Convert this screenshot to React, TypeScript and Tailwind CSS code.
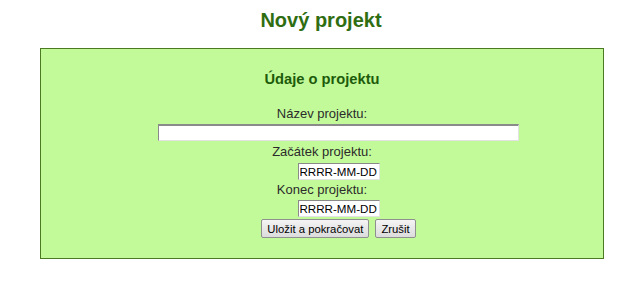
export default function App() {
  const field =
    "bg-white border border-t-[#8a8a8a] border-l-[#8a8a8a] border-b-[#e2e2e2] border-r-[#e2e2e2] outline-none";
  return (
    <div className="w-[642px] h-[288px] bg-white pt-[8px] font-['Liberation_Sans',Arial,sans-serif] text-[13px] text-[#2b2b2b]">
      <h1 className="text-center text-[20px] leading-[24px] font-bold text-[#2f6d12]">Nový projekt</h1>
      <div className="mt-[16px] ml-[40px] w-[564px] h-[211px] border border-[#4b7a22] bg-[#c3fa99] flex flex-col items-center pt-[21px]">
        <h2 className="text-[14.7px] leading-[18px] font-bold text-[#1d5c0b]">Údaje o projektu</h2>
        <label className="mt-[18px] leading-[16px]">Název projektu:</label>
        <input type="text" className={`mt-[2px] ml-[33px] w-[361px] h-[17px] border-t-2 ${field}`} />
        <label className="mt-[3px] leading-[16px]">Začátek projektu:</label>
        <input
          type="text"
          defaultValue="RRRR-MM-DD"
          className={`mt-[3px] ml-[33px] w-[82px] h-[17px] pl-[1px] pr-0 text-[11.6px] leading-[15px] text-black ${field}`}
        />
        <label className="mt-[2px] leading-[16px]">Konec projektu:</label>
        <input
          type="text"
          defaultValue="RRRR-MM-DD"
          className={`mt-[2px] ml-[33px] w-[82px] h-[17px] pl-[1px] pr-0 text-[11.6px] leading-[15px] text-black ${field}`}
        />
        <div className="mt-[2px] ml-[33px] flex gap-[6px]">
          <button className="h-[19px] px-[5px] text-[11.3px] leading-[14px] text-black border border-[#8f8f8f] rounded-[2px] bg-gradient-to-b from-[#f4f4f4] to-[#dcdcdc]">
            Uložit a pokračovat
          </button>
          <button className="h-[19px] px-[5px] text-[11.3px] leading-[14px] text-black border border-[#8f8f8f] rounded-[2px] bg-gradient-to-b from-[#f4f4f4] to-[#dcdcdc]">
            Zrušit
          </button>
        </div>
      </div>
    </div>
  );
}
